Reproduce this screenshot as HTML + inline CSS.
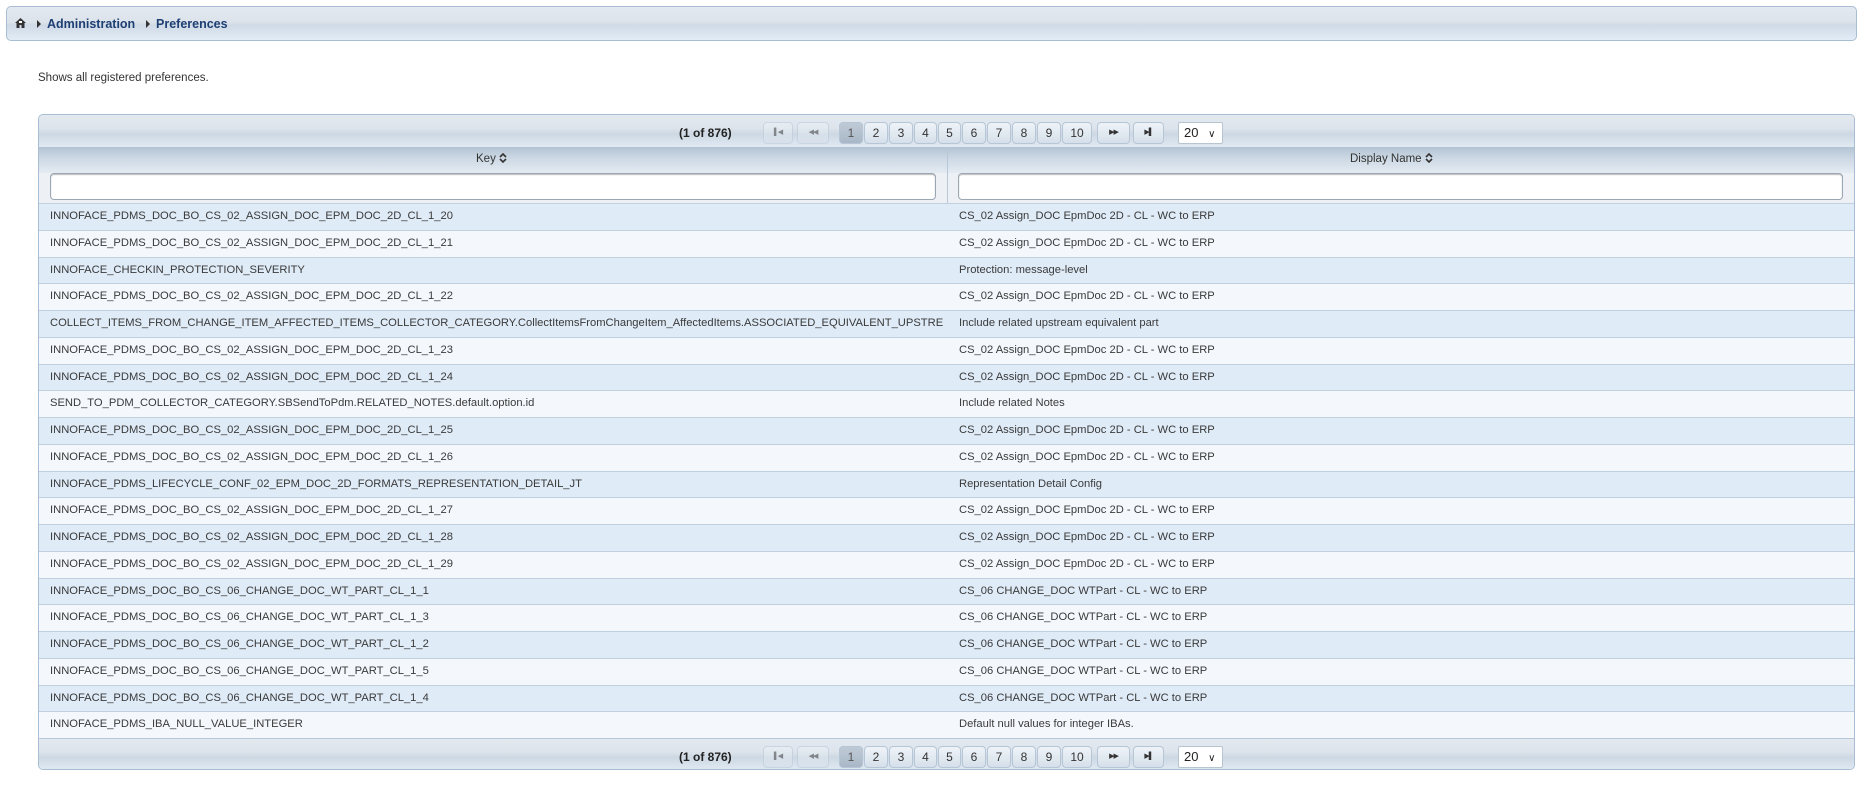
<!DOCTYPE html>
<html><head><meta charset="utf-8"><style>
*{box-sizing:border-box;margin:0;padding:0}
body{width:1863px;height:807px;background:#fff;font-family:"Liberation Sans","DejaVu Sans",sans-serif;font-size:12px;color:#333;position:relative;overflow:hidden}
.bc{position:absolute;left:6px;top:6px;width:1851px;height:35px;border:1px solid #a8bed4;border-radius:5px;background:linear-gradient(#e4e9f0 0%,#dce3eb 45%,#cfdae6 55%,#e2ecf6 100%)}
.bc .t{position:absolute;top:10px;font-weight:bold;color:#1e3f73;font-size:12.5px}
.tri{position:absolute;top:13px;width:0;height:0;border-top:4px solid transparent;border-bottom:4px solid transparent;border-left:4px solid #333}
.desc{position:absolute;left:38px;top:72px;font-size:11.5px;color:#333}
.tbl{position:absolute;left:38px;top:114px;width:1817px;height:656px;border:1px solid #a8bed4;border-radius:5px;overflow:hidden;background:#eef2f6}
.pg{position:absolute;left:0;width:100%;height:32px;background:linear-gradient(#e4e9ef 0%,#dde4ec 40%,#cdd8e3 60%,#e1eaf3 100%)}
.pg .c{position:absolute;top:11px;font-weight:bold;font-size:12px;color:#222}
.b{position:absolute;top:7px;height:22px;border:1px solid #b6c6d6;border-radius:4px;background:linear-gradient(#eef3f8,#d6e0ea);font-size:12px;color:#333;text-align:center;line-height:20px}
.b.d{opacity:.5}
.b.s{font-size:7px;letter-spacing:-1px}
.b.a{background:linear-gradient(#bfcad6,#a9b7c6);color:#555}
.sel{position:absolute;top:7px;left:1139px;width:45px;height:22px;border:1px solid #b8c4d0;background:#fff;border-radius:2px;font-size:13px;line-height:20px;padding-left:5px;color:#222}
.hd{position:absolute;top:32px;left:0;width:100%;height:26px;background:linear-gradient(#b3c3d3 0%,#cbd7e3 40%,#e4ebf2 100%)}
.hd div{position:absolute;top:6px;font-size:11.5px;color:#333}
.flt{position:absolute;top:58px;left:0;width:100%;height:30px;background:#edf1f5}
.in{position:absolute;top:0;height:27px;border:1px solid #9aa6b2;border-radius:4px;background:#fff;box-shadow:inset 0 1px 1px #bbb}
.vl{position:absolute;left:908px;top:32px;width:1px;height:591px;background:#b8c8d8}
.rows{position:absolute;top:88px;left:0;width:100%}
.r{height:26.75px;border-top:1px solid #c0d0e0;position:relative;font-size:11.2px;line-height:25px;white-space:nowrap;overflow:hidden;color:#3a3a3a}
.r:nth-child(odd){background:#dfebf7}
.r:nth-child(even){background:#f4f8fd}
.r span{position:absolute;top:0}
.r .k{left:11px;width:893px;overflow:hidden}
.r .v{left:920px}
</style></head><body>
<div class="bc">
<svg style="position:absolute;left:8px;top:11px" width="11" height="10" viewBox="0 0 11 10"><path d="M5.5 0L0 5h1.5v5h3V7h2v3h3V5H11z" fill="#333"/><rect x="4" y="3" width="3" height="2" fill="#fff"/></svg>
<div class="tri" style="left:30px"></div><div class="t" style="left:40px">Administration</div>
<div class="tri" style="left:139px"></div><div class="t" style="left:149px">Preferences</div>
</div>
<div class="desc">Shows all registered preferences.</div>
<div class="tbl">
<div class="pg" style="top:0">
<div class="c" style="left:640px">(1 of 876)</div>
<div class="b d s" style="left:724px;width:30px">&#9612;&#9664;</div>
<div class="b d s" style="left:758px;width:32px">&#9664;&#9664;</div>
<div class="b a" style="left:800px;width:24px">1</div><div class="b" style="left:825px;width:24px">2</div><div class="b" style="left:850px;width:24px">3</div><div class="b" style="left:875px;width:23px">4</div><div class="b" style="left:899px;width:23px">5</div><div class="b" style="left:923px;width:24px">6</div><div class="b" style="left:948px;width:24px">7</div><div class="b" style="left:973px;width:24px">8</div><div class="b" style="left:998px;width:24px">9</div><div class="b" style="left:1023px;width:30px">10</div>
<div class="b s" style="left:1058px;width:33px">&#9654;&#9654;</div>
<div class="b s" style="left:1094px;width:31px">&#9654;&#9612;</div>
<div class="sel">20 <span style="font-size:10px;margin-left:6px">&#8744;</span></div>
</div>
<div class="hd"><div style="left:437px">Key <svg width="8" height="10" viewBox="0 0 8 10" style="vertical-align:-1px"><path d="M1 4L4 1L7 4M1 6L4 9L7 6" fill="none" stroke="#333" stroke-width="1.6"/></svg></div><div style="left:1311px">Display Name <svg width="8" height="10" viewBox="0 0 8 10" style="vertical-align:-1px"><path d="M1 4L4 1L7 4M1 6L4 9L7 6" fill="none" stroke="#333" stroke-width="1.6"/></svg></div></div>
<div class="flt"><div class="in" style="left:11px;width:886px"></div><div class="in" style="left:919px;width:885px"></div></div>
<div class="vl"></div>
<div class="rows">
<div class="r"><span class="k">INNOFACE_PDMS_DOC_BO_CS_02_ASSIGN_DOC_EPM_DOC_2D_CL_1_20</span><span class="v">CS_02 Assign_DOC EpmDoc 2D - CL - WC to ERP</span></div>
<div class="r"><span class="k">INNOFACE_PDMS_DOC_BO_CS_02_ASSIGN_DOC_EPM_DOC_2D_CL_1_21</span><span class="v">CS_02 Assign_DOC EpmDoc 2D - CL - WC to ERP</span></div>
<div class="r"><span class="k">INNOFACE_CHECKIN_PROTECTION_SEVERITY</span><span class="v">Protection: message-level</span></div>
<div class="r"><span class="k">INNOFACE_PDMS_DOC_BO_CS_02_ASSIGN_DOC_EPM_DOC_2D_CL_1_22</span><span class="v">CS_02 Assign_DOC EpmDoc 2D - CL - WC to ERP</span></div>
<div class="r"><span class="k">COLLECT_ITEMS_FROM_CHANGE_ITEM_AFFECTED_ITEMS_COLLECTOR_CATEGORY.CollectItemsFromChangeItem_AffectedItems.ASSOCIATED_EQUIVALENT_UPSTREAM</span><span class="v">Include related upstream equivalent part</span></div>
<div class="r"><span class="k">INNOFACE_PDMS_DOC_BO_CS_02_ASSIGN_DOC_EPM_DOC_2D_CL_1_23</span><span class="v">CS_02 Assign_DOC EpmDoc 2D - CL - WC to ERP</span></div>
<div class="r"><span class="k">INNOFACE_PDMS_DOC_BO_CS_02_ASSIGN_DOC_EPM_DOC_2D_CL_1_24</span><span class="v">CS_02 Assign_DOC EpmDoc 2D - CL - WC to ERP</span></div>
<div class="r"><span class="k">SEND_TO_PDM_COLLECTOR_CATEGORY.SBSendToPdm.RELATED_NOTES.default.option.id</span><span class="v">Include related Notes</span></div>
<div class="r"><span class="k">INNOFACE_PDMS_DOC_BO_CS_02_ASSIGN_DOC_EPM_DOC_2D_CL_1_25</span><span class="v">CS_02 Assign_DOC EpmDoc 2D - CL - WC to ERP</span></div>
<div class="r"><span class="k">INNOFACE_PDMS_DOC_BO_CS_02_ASSIGN_DOC_EPM_DOC_2D_CL_1_26</span><span class="v">CS_02 Assign_DOC EpmDoc 2D - CL - WC to ERP</span></div>
<div class="r"><span class="k">INNOFACE_PDMS_LIFECYCLE_CONF_02_EPM_DOC_2D_FORMATS_REPRESENTATION_DETAIL_JT</span><span class="v">Representation Detail Config</span></div>
<div class="r"><span class="k">INNOFACE_PDMS_DOC_BO_CS_02_ASSIGN_DOC_EPM_DOC_2D_CL_1_27</span><span class="v">CS_02 Assign_DOC EpmDoc 2D - CL - WC to ERP</span></div>
<div class="r"><span class="k">INNOFACE_PDMS_DOC_BO_CS_02_ASSIGN_DOC_EPM_DOC_2D_CL_1_28</span><span class="v">CS_02 Assign_DOC EpmDoc 2D - CL - WC to ERP</span></div>
<div class="r"><span class="k">INNOFACE_PDMS_DOC_BO_CS_02_ASSIGN_DOC_EPM_DOC_2D_CL_1_29</span><span class="v">CS_02 Assign_DOC EpmDoc 2D - CL - WC to ERP</span></div>
<div class="r"><span class="k">INNOFACE_PDMS_DOC_BO_CS_06_CHANGE_DOC_WT_PART_CL_1_1</span><span class="v">CS_06 CHANGE_DOC WTPart - CL - WC to ERP</span></div>
<div class="r"><span class="k">INNOFACE_PDMS_DOC_BO_CS_06_CHANGE_DOC_WT_PART_CL_1_3</span><span class="v">CS_06 CHANGE_DOC WTPart - CL - WC to ERP</span></div>
<div class="r"><span class="k">INNOFACE_PDMS_DOC_BO_CS_06_CHANGE_DOC_WT_PART_CL_1_2</span><span class="v">CS_06 CHANGE_DOC WTPart - CL - WC to ERP</span></div>
<div class="r"><span class="k">INNOFACE_PDMS_DOC_BO_CS_06_CHANGE_DOC_WT_PART_CL_1_5</span><span class="v">CS_06 CHANGE_DOC WTPart - CL - WC to ERP</span></div>
<div class="r"><span class="k">INNOFACE_PDMS_DOC_BO_CS_06_CHANGE_DOC_WT_PART_CL_1_4</span><span class="v">CS_06 CHANGE_DOC WTPart - CL - WC to ERP</span></div>
<div class="r"><span class="k">INNOFACE_PDMS_IBA_NULL_VALUE_INTEGER</span><span class="v">Default null values for integer IBAs.</span></div>
</div>
<div class="pg" style="top:623px;border-top:1px solid #b8c8d8">
<div class="c" style="left:640px">(1 of 876)</div>
<div class="b d s" style="left:724px;width:30px">&#9612;&#9664;</div>
<div class="b d s" style="left:758px;width:32px">&#9664;&#9664;</div>
<div class="b a" style="left:800px;width:24px">1</div><div class="b" style="left:825px;width:24px">2</div><div class="b" style="left:850px;width:24px">3</div><div class="b" style="left:875px;width:23px">4</div><div class="b" style="left:899px;width:23px">5</div><div class="b" style="left:923px;width:24px">6</div><div class="b" style="left:948px;width:24px">7</div><div class="b" style="left:973px;width:24px">8</div><div class="b" style="left:998px;width:24px">9</div><div class="b" style="left:1023px;width:30px">10</div>
<div class="b s" style="left:1058px;width:33px">&#9654;&#9654;</div>
<div class="b s" style="left:1094px;width:31px">&#9654;&#9612;</div>
<div class="sel">20 <span style="font-size:10px;margin-left:6px">&#8744;</span></div>
</div>
</div>
</body></html>
